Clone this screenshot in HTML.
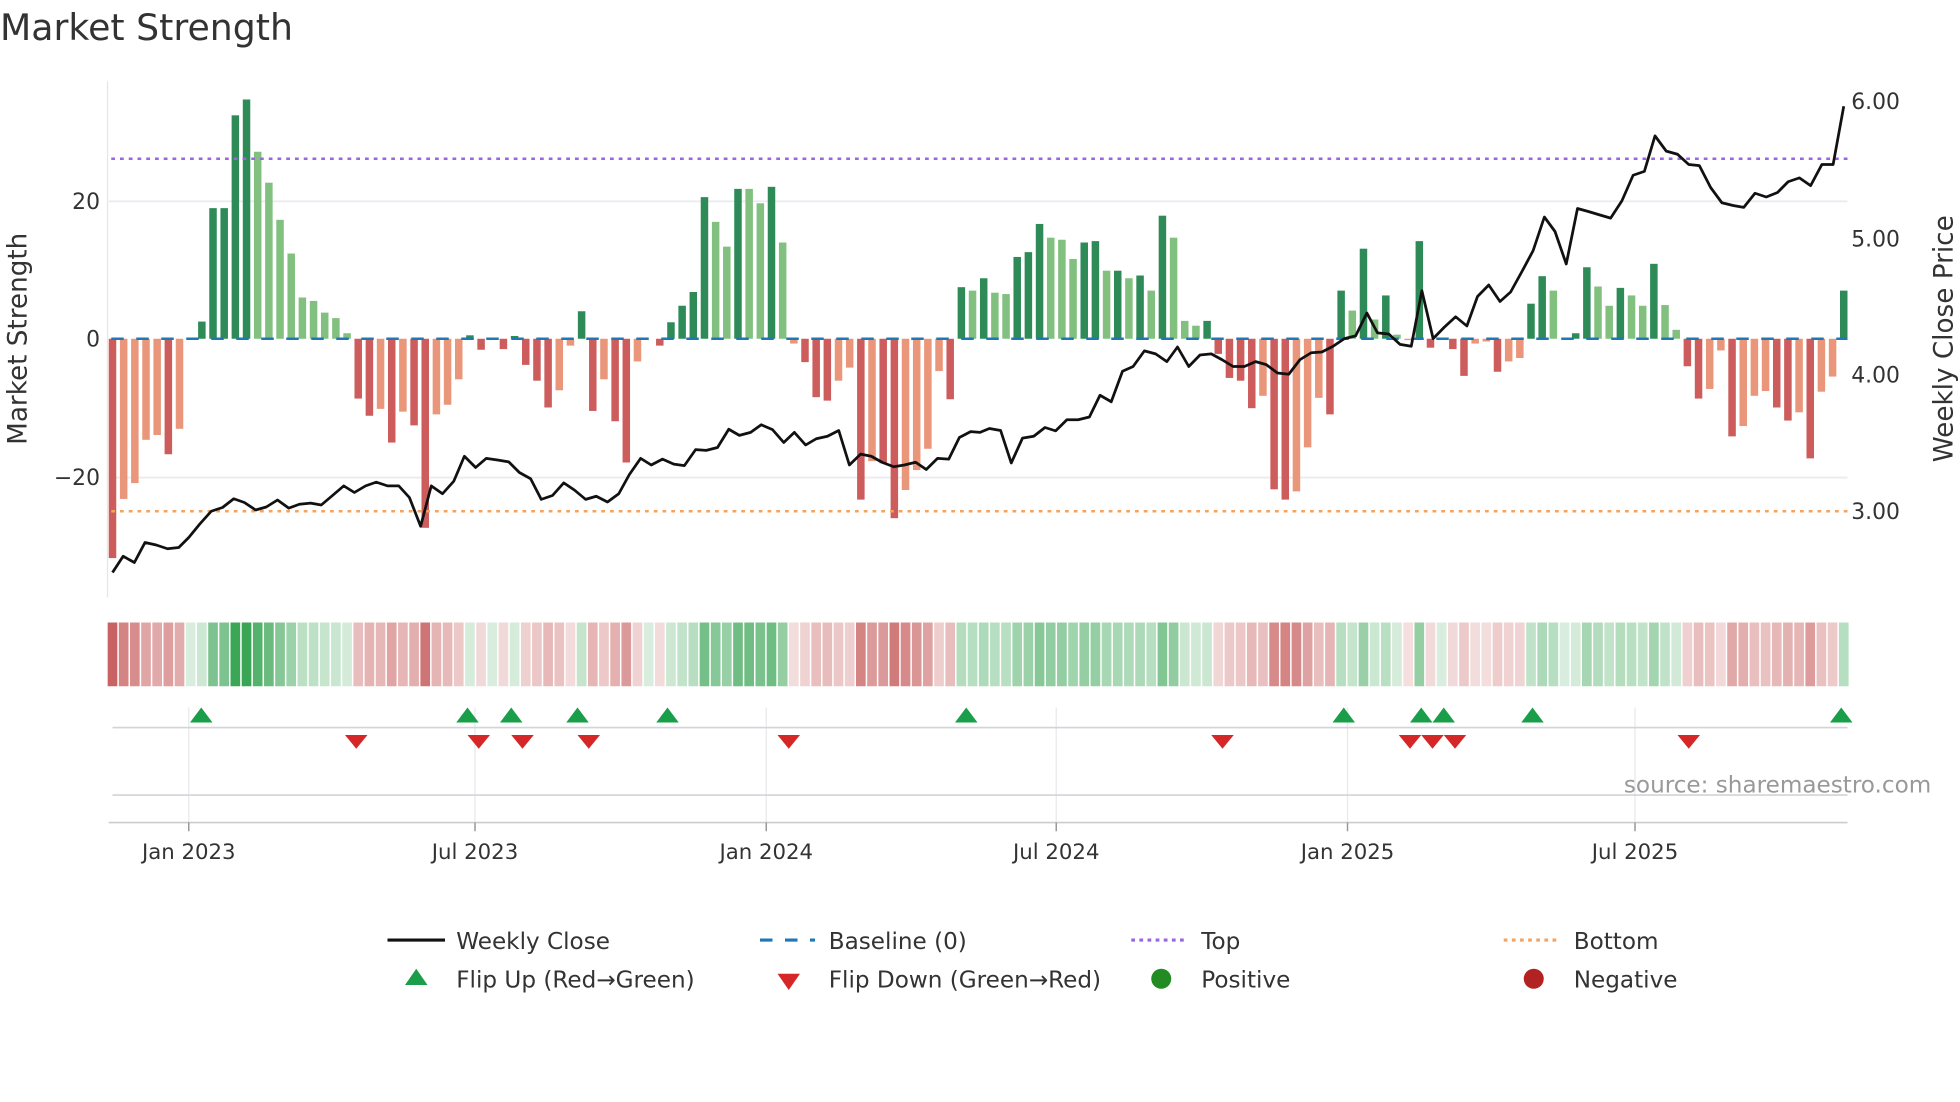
<!DOCTYPE html>
<html><head><meta charset="utf-8"><style>
html,body{margin:0;padding:0;background:#fff;width:1960px;height:1102px;overflow:hidden}
svg text{font-family:"DejaVu Sans","Liberation Sans",sans-serif;fill:#333}
</style></head><body>
<svg id="s" width="1960" height="1102" viewBox="0 0 1568 881.6" xmlns="http://www.w3.org/2000/svg">
<rect width="1568" height="882" fill="#fff"/>
<text x="0" y="32" font-size="29" fill="#333">Market Strength</text>
<line x1="86" y1="65" x2="86" y2="478" stroke="#e6e6ea" stroke-width="1"/>
<line x1="87" y1="161" x2="1478" y2="161" stroke="#ebebf2" stroke-width="1.5"/>
<line x1="87" y1="382" x2="1478" y2="382" stroke="#ebebf2" stroke-width="1.5"/>
<g id="bars"></g>
<line x1="89" y1="271" x2="1478" y2="271" stroke="#1f77b4" stroke-width="2" stroke-dasharray="10,10"/>
<line x1="89" y1="127" x2="1478" y2="127" stroke="#9966dd" stroke-width="2" stroke-dasharray="3,4"/>
<line x1="89" y1="409" x2="1478" y2="409" stroke="#f4a460" stroke-width="2" stroke-dasharray="3,4"/>
<polyline id="price" fill="none" stroke="#111" stroke-width="2.2" stroke-linejoin="round"/>
<g font-size="17.5" text-anchor="end">
<text x="80" y="167">20</text><text x="80" y="277">0</text><text x="80" y="388">−20</text>
</g>
<g font-size="17.5">
<text x="1481" y="87">6.00</text><text x="1481" y="197">5.00</text><text x="1481" y="306">4.00</text><text x="1481" y="415">3.00</text>
</g>
<text transform="translate(21,271) rotate(-90)" font-size="21" text-anchor="middle">Market Strength</text>
<text transform="translate(1562,271) rotate(-90)" font-size="21" text-anchor="middle">Weekly Close Price</text>
<g id="strip"></g>
<g stroke="#e8e8ee" stroke-width="1">
<line x1="151" y1="566" x2="151" y2="658"/><line x1="380" y1="566" x2="380" y2="658"/><line x1="613" y1="566" x2="613" y2="658"/><line x1="845" y1="566" x2="845" y2="658"/><line x1="1078" y1="566" x2="1078" y2="658"/><line x1="1308" y1="566" x2="1308" y2="658"/>
</g>
<line x1="90" y1="582" x2="1478" y2="582" stroke="#d3d3d8" stroke-width="1.3"/>
<line x1="90" y1="636" x2="1478" y2="636" stroke="#d3d3d8" stroke-width="1.3"/>
<line x1="87" y1="658" x2="1478" y2="658" stroke="#ccc" stroke-width="1.3"/>
<g stroke="#999" stroke-width="1.2">
<line x1="151" y1="658" x2="151" y2="665"/><line x1="380" y1="658" x2="380" y2="665"/><line x1="613" y1="658" x2="613" y2="665"/><line x1="845" y1="658" x2="845" y2="665"/><line x1="1078" y1="658" x2="1078" y2="665"/><line x1="1308" y1="658" x2="1308" y2="665"/>
</g>
<g id="marks"></g>
<g font-size="17" text-anchor="middle">
<text x="151" y="687">Jan 2023</text><text x="380" y="687">Jul 2023</text><text x="613" y="687">Jan 2024</text><text x="845" y="687">Jul 2024</text><text x="1078" y="687">Jan 2025</text><text x="1308" y="687">Jul 2025</text>
</g>
<text x="1545" y="634" font-size="18.5" text-anchor="end" fill="#999" style="fill:#999">source: sharemaestro.com</text>
<g font-size="18.5">
<line x1="310" y1="752" x2="356" y2="752" stroke="#111" stroke-width="2.5"/>
<text x="365" y="759">Weekly Close</text>
<line x1="608" y1="752" x2="652" y2="752" stroke="#1f77b4" stroke-width="2.5" stroke-dasharray="10,10"/>
<text x="663" y="759">Baseline (0)</text>
<line x1="905" y1="752" x2="950" y2="752" stroke="#9966dd" stroke-width="2.5" stroke-dasharray="3,3.5"/>
<text x="961" y="759">Top</text>
<line x1="1203" y1="752" x2="1248" y2="752" stroke="#f4a460" stroke-width="2.5" stroke-dasharray="3,3.5"/>
<text x="1259" y="759">Bottom</text>
<polygon points="324,788 342,788 333,775" fill="#1a9e4a"/>
<text x="365" y="790">Flip Up (Red→Green)</text>
<polygon points="622,779 640,779 631,792" fill="#d62728"/>
<text x="663" y="790">Flip Down (Green→Red)</text>
<circle cx="929" cy="783" r="8" fill="#228b22"/>
<text x="961" y="790">Positive</text>
<circle cx="1227" cy="783" r="8" fill="#b22222"/>
<text x="1259" y="790">Negative</text>
</g>
</svg>
<script>
var V="d-31.9 l-23.3 l-21 l-14.7 l-14 d-16.8 l-13.1 d0 d2.5 d19 d19 d32.5 d34.8 l27.2 l22.7 l17.3 l12.4 l6 l5.5 l3.8 l3 l0.8 d-8.7 d-11.2 l-10.2 d-15.1 l-10.6 d-12.6 d-27.5 l-11 l-9.6 l-5.9 d0.5 d-1.6 d0 d-1.5 d0.4 d-3.8 d-6.1 d-10 l-7.5 l-1 d4 d-10.5 l-5.9 d-12 d-18 l-3.3 d0 d-1 d2.4 d4.8 d6.8 d20.6 l17 l13.4 d21.8 l21.8 l19.7 d22.1 l14 l-0.7 d-3.4 d-8.5 d-9 l-6.1 l-4.2 d-23.4 l-17.8 d-18.1 d-26.1 l-22 l-19.1 l-16 l-4.7 d-8.8 d7.5 l7 d8.8 l6.7 l6.5 d11.9 d12.6 d16.7 l14.7 l14.4 l11.6 d14 d14.2 l9.9 d9.9 l8.8 d9.2 l7 d17.9 l14.7 l2.6 l1.9 d2.6 d-2.2 d-5.7 d-6.1 d-10.1 l-8.3 d-21.9 d-23.4 l-22.2 l-15.8 l-8.6 d-11 d7 l4.1 d13.1 l2.8 d6.3 l0.6 l-0.2 d14.2 d-1.3 d0 d-1.5 d-5.4 l-0.7 l-0.4 d-4.8 l-3.3 l-2.8 d5.1 d9.1 l7 d0 d0.8 d10.4 l7.6 l4.8 d7.4 l6.3 l4.8 d10.9 l4.9 l1.3 d-4 d-8.7 l-7.3 l-1.7 d-14.2 l-12.7 l-8.3 l-7.6 d-10 d-11.9 l-10.7 d-17.4 l-7.7 l-5.5 d7".split(" ");
var NS="http://www.w3.org/2000/svg",n=V.length,step=(1475-90)/(n-1);
function el(t,a,p){var e=document.createElementNS(NS,t);for(var k in a)e.setAttribute(k,a[k]);document.getElementById(p).appendChild(e);return e;}
for(var i=0;i<n;i++){var t=V[i][0],v=parseFloat(V[i].slice(1)),x=90+i*step;
 var c=v>=0?(t=="d"?"#2e8b57":"#81c07f"):(t=="d"?"#cd5c5c":"#e9967a");
 if(v!=0){var y=271-v*5.5;el("rect",{x:x-3,y:Math.min(y,271),width:6,height:Math.abs(v*5.5),fill:c},"bars");}
 var a=Math.min(1,0.2+Math.abs(v)/35*0.85),b=v>=0?[58,165,85]:[200,95,95];
 var r=Math.round(255+(b[0]-255)*a),g=Math.round(255+(b[1]-255)*a),bb=Math.round(255+(b[2]-255)*a);
 el("rect",{x:x-step/2+0.6,y:498,width:step-1.2,height:51,fill:"rgb("+r+","+g+","+bb+")"},"strip");}
var P="90,458 98.5,445 107.5,450 116,434 125,436 134,439 143,438 151,430 160,419 169,409 178,406 187,399 195.5,402 204.5,408 213,405.6 222,400 231,406.5 239.5,403.4 248.5,402.5 257,404 266,396.4 275,388.7 283.5,394 292.5,388.7 301,385.7 310,388.7 319,388.7 327.5,398 336.5,421 345,388.7 354,395 363,385 371.5,365 380.5,374 389,366.7 398,368 407,369.5 415.5,378 424.5,383 433,399.5 442,396.4 451,386.3 459.5,392 468.5,399.5 477,397 486,401.6 495,395 503.5,379.6 512.5,366.7 521,372 530,367.3 539,371.3 547.5,372.5 556.5,359.7 565,360.3 574,358 583,343.4 591.5,348.3 600.5,345.9 609,339.8 618,343.7 627,354 635.5,345.9 644.5,356 653,351 662,349 671,344.4 679.5,372 688.5,363.3 697,365 706,370 715,373.4 723.5,372 732.5,369.8 741,375.6 750,366.7 759,367.3 767.5,350 776.5,345.3 784,345.9 791.5,342.8 800.5,344.4 809,370.4 818,350.5 827,349 836,342 844.5,344.7 853.5,335.8 862.5,335.8 871.5,333.6 880,316.2 889,321.4 898,297 906.5,293.2 915.5,280.7 924.5,283.1 933.5,289.3 942,277.6 951,293.2 960,284 969,283.1 977.5,287.7 986.5,293.2 995.5,293.2 1004.5,289.3 1013,291.7 1022,298.4 1031,299.4 1040,287.7 1049,282.2 1057.5,281.6 1066.5,277 1075.5,270.9 1084.5,268.7 1093.5,250.4 1102,266.3 1111,267.2 1120,275.5 1129,277 1137.5,232.6 1146.5,270.9 1155.5,261.7 1164.5,253.4 1173.5,260.8 1182,237.2 1191,228 1200,241.2 1208.5,233.6 1217.5,217.3 1226.5,200.5 1235.5,173.6 1244,185.2 1253,211.2 1262,166.8 1271,169.3 1280,172 1288.5,174.5 1297.5,160.7 1306.5,140.2 1315.5,137.1 1324,108.7 1333,120.9 1342,123.4 1351,131.6 1359.5,132.5 1368.5,150 1377.5,162.2 1386.5,164.4 1395,165.9 1404,154.6 1413,157.6 1422,154 1430.5,145.4 1439.5,142.3 1448.5,148.5 1457.5,131.6 1466.5,131.6 1475,85";
document.getElementById("price").setAttribute("points",P);
[161,374,409,462,534,773,1075,1137,1155,1226,1473].forEach(function(x){el("polygon",{points:(x-9)+",578 "+(x+9)+",578 "+x+",566",fill:"#1a9e4a"},"marks");});
[285,383,418,471,631,978,1128,1146,1164,1351].forEach(function(x){el("polygon",{points:(x-9)+",588 "+(x+9)+",588 "+x+",599",fill:"#d62728"},"marks");});
</script>
</body></html>
